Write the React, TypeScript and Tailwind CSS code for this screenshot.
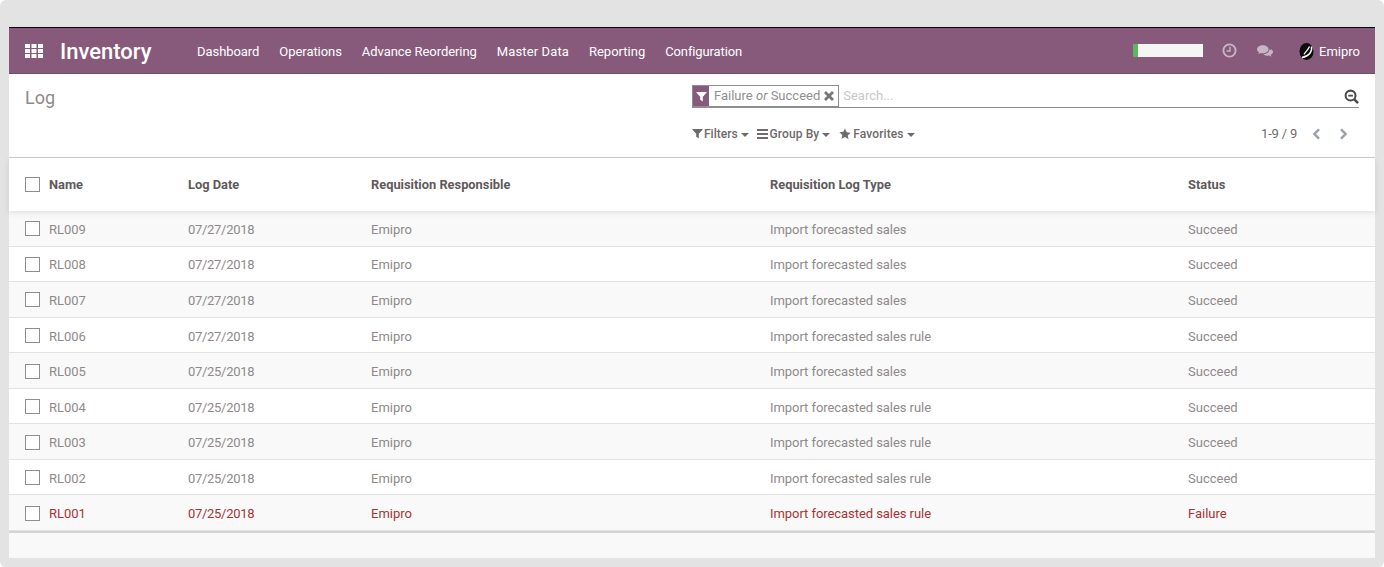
import React from 'react'

const rows = [
  { name: 'RL009', date: '07/27/2018', type: 'Import forecasted sales', status: 'Succeed' },
  { name: 'RL008', date: '07/27/2018', type: 'Import forecasted sales', status: 'Succeed' },
  { name: 'RL007', date: '07/27/2018', type: 'Import forecasted sales', status: 'Succeed' },
  { name: 'RL006', date: '07/27/2018', type: 'Import forecasted sales rule', status: 'Succeed' },
  { name: 'RL005', date: '07/25/2018', type: 'Import forecasted sales', status: 'Succeed' },
  { name: 'RL004', date: '07/25/2018', type: 'Import forecasted sales rule', status: 'Succeed' },
  { name: 'RL003', date: '07/25/2018', type: 'Import forecasted sales rule', status: 'Succeed' },
  { name: 'RL002', date: '07/25/2018', type: 'Import forecasted sales rule', status: 'Succeed' },
  { name: 'RL001', date: '07/25/2018', type: 'Import forecasted sales rule', status: 'Failure' },
]

const menu = [
  { label: 'Dashboard', className: 'tracking-[-0.06px]' },
  { label: 'Operations', className: 'tracking-[-0.06px]' },
  { label: 'Advance Reordering', className: 'tracking-[-0.06px]' },
  { label: 'Master Data', className: 'tracking-[0.12px]' },
  { label: 'Reporting', className: '' },
  { label: 'Configuration', className: 'tracking-[-0.12px]' },
]

const FunnelIcon = ({ className }: { className: string }) => (
  <svg viewBox="0 0 12 12" className={className} fill="currentColor">
    <path d="M0.5 1h11v1L7.4 6.4V11.5L4.6 9.6V6.4L0.5 2z" />
  </svg>
)

const Caret = () => (
  <span className="ml-[3px] mt-[2px] inline-block border-x-[4px] border-t-[4px] border-x-transparent border-t-[#6f6a6c]" />
)

const Checkbox = () => <span className="block size-[15px] border border-[#8e8e8e] bg-white" />

const App: React.FC = () => {
  return (
    <div className="h-[567px] w-[1384px] overflow-hidden rounded-[6px] bg-[#e3e3e3] pl-[9px] pr-[9px] pt-[27px] font-['Roboto',sans-serif] text-[13px]">
      <div className="flex h-[531px] flex-col border-t border-black bg-[#f9f9f9]">
        {/* Navbar */}
        <nav className="flex h-[46px] shrink-0 items-center border-b border-[#6f4f68] bg-[#875a7b] text-white">
          <svg viewBox="0 0 18 14" className="ml-[16px] h-[14px] w-[18px]" fill="currentColor">
            <path d="M0 0h5v4H0zM6.500 0h5v4h-5zM13 0h5v4h-5zM0 5h5v4H0zM6.500 5h5v4h-5zM13 5h5v4h-5zM0 10h5v4H0zM6.500 10h5v4h-5zM13 10h5v4h-5z" />
          </svg>
          <span className="ml-[17px] mt-[2px] w-[137px] text-[22px] font-medium leading-none">Inventory</span>
          <div className="mt-[2px] flex gap-[20px]">
            {menu.map((item) => (
              <span key={item.label} className={item.className}>
                {item.label}
              </span>
            ))}
          </div>
          <div className="ml-auto flex items-center">
            <div className="h-[13px] w-[70px] border-l-[5px] border-[#5cb85c] bg-[#f5f5f5]" />
            <svg viewBox="0 0 16 16" className="ml-[19px] size-[15px] text-[#c8b5c4]" fill="none" stroke="currentColor">
              <circle cx="8" cy="8" r="6.500" strokeWidth="2" />
              <path d="M8.500 4v4.500H5" strokeWidth="1.500" />
            </svg>
            <svg viewBox="0 0 18 14" className="ml-[20px] mt-[1px] h-[13px] w-[16px] text-[#c8b5c4]" fill="currentColor">
              <path d="M6.500 0C2.900 0 0 2 0 4.500c0 1.400.9 2.700 2.300 3.500L1.500 10l2.700-1.300c.7.200 1.500.3 2.300.3 3.600 0 6.500-2 6.500-4.500S10.100 0 6.500 0z" />
              <path d="M14 4.500c0 3-3 5.300-6.800 5.500 1 1 2.700 1.700 4.500 1.700.6 0 1.200-.1 1.800-.2l2.700 1.500-.8-2.300c1.600-.8 2.600-2 2.600-3.400 0-1.300-1.100-2.500-2.600-3.200.4.400.6.900.6 1.400z" />
            </svg>
            <svg viewBox="0 0 15 17" className="ml-[26px] mt-[1px] h-[17px] w-[15px]" fill="none">
              <ellipse cx="7.500" cy="8.500" rx="7" ry="8.500" fill="#0c0c0c" />
              <path d="M12.500 3.500C13.500 8.500 10 13.500 3 14.500" stroke="#fff" strokeWidth="1.500" />
              <path d="M10.500 3.500C9.500 6.500 6.500 8.500 5 11.500" stroke="#fff" strokeWidth="1.200" />
            </svg>
            <span className="ml-[5px] mr-[16px] mt-[2px] w-[40px]">Emipro</span>
          </div>
        </nav>

        {/* Control panel */}
        <div className="flex h-[84px] shrink-0 border-b border-[#cccccc] bg-white pl-[16px] pr-[16px]">
          <div className="w-[667px] pt-[12px] text-[18px] leading-[24px] text-[#8f8a8a]">Log</div>
          <div className="flex-1 pt-[11px]">
            <div className="flex h-[23px] items-center border-b border-[#8e8e8e]">
              <div className="flex h-[22px] items-center border border-[#8e8e8e] bg-white">
                <span className="flex h-full w-[16px] items-center justify-center bg-[#875a7b] text-white">
                  <FunnelIcon className="size-[11px]" />
                </span>
                <span className="ml-[5px] text-[#8f8f8f]">
                  Failure <em className="italic">or</em> Succeed
                </span>
                <svg viewBox="0 0 10 10" className="ml-[4px] mr-[4px] size-[10px] text-[#777777]" stroke="currentColor" strokeWidth="2.800">
                  <path d="M1 1l8 8M9 1l-8 8" />
                </svg>
              </div>
              <span className="ml-[4px] text-[#c9c9c9]">Search...</span>
              <svg viewBox="0 0 16 16" className="ml-auto size-[15px] text-[#4c4c4c]" fill="none" stroke="currentColor">
                <circle cx="7" cy="7" r="5.300" strokeWidth="2.200" />
                <path d="M11 11l4 4" strokeWidth="2.800" />
                <path d="M4.500 7h5" strokeWidth="1.800" />
              </svg>
            </div>
            <div className="mt-[16px] flex items-center text-[12px] font-medium text-[#6f6a6c]">
              <FunnelIcon className="mr-[1px] size-[11px]" />
              <span>Filters</span>
              <Caret />
              <svg viewBox="0 0 11 10" className="ml-[8px] mr-[2px] h-[10px] w-[11px]" fill="currentColor">
                <path d="M0 0h11v2H0zM0 4h11v2H0zM0 8h11v2H0z" />
              </svg>
              <span className="tracking-[0.1px]">Group By</span>
              <Caret />
              <svg viewBox="0 0 24 24" className="ml-[9px] mr-[2px] size-[12px]" fill="currentColor">
                <path d="M12 1l3.400 7.300 7.900 1-5.800 5.500 1.500 7.900L12 18l-7 3.700 1.500-7.900L.7 8.300l7.900-1z" />
              </svg>
              <span className="tracking-[0.1px]">Favorites</span>
              <Caret />
              <div className="ml-auto flex items-center pr-[11px] font-normal text-[#6f6a6c]">
                <span className="mr-[15px] text-[13px] tracking-[-0.2px]">1-9 / 9</span>
                <svg viewBox="0 0 10 14" className="mr-[18px] h-[12px] w-[9px] text-[#9aa0a6]" fill="none" stroke="currentColor" strokeWidth="2.800">
                  <path d="M8 1.500L2.500 7 8 12.500" />
                </svg>
                <svg viewBox="0 0 10 14" className="h-[12px] w-[9px] text-[#9aa0a6]" fill="none" stroke="currentColor" strokeWidth="2.800">
                  <path d="M2 1.500L7.500 7 2 12.500" />
                </svg>
              </div>
            </div>
          </div>
        </div>

        {/* Log list */}
        <div className="relative z-10 flex h-[53px] shrink-0 items-center bg-white text-[12.850px] font-bold text-[#5f5a5c] shadow-[0_2px_6px_rgba(0,0,0,0.1)]">
          <div className="flex w-[179px] items-center pl-[16px]">
            <Checkbox />
            <span className="ml-[9px] mt-[1px]">Name</span>
          </div>
          <div className="mt-[1px] w-[183px]">Log Date</div>
          <div className="mt-[1px] w-[399px]">Requisition Responsible</div>
          <div className="mt-[1px] w-[418px]">Requisition Log Type</div>
          <div className="mt-[1px]">Status</div>
        </div>
        {rows.map((row, i) => (
          <div
            key={row.name}
            className={`flex h-[35.550px] shrink-0 items-center border-b border-[#e2e2e2] pt-[2.800px] ${i % 2 === 0 ? 'bg-[#f9f9f9]' : 'bg-white'} ${
              row.status === 'Failure' ? 'text-[#a83333]' : 'text-[#8f8a8a]'
            }`}
          >
            <div className="flex w-[179px] items-center pl-[16px]">
              <div className="-mt-[1.700px]">
                <Checkbox />
              </div>
              <span className="ml-[9px]">{row.name}</span>
            </div>
            <div className="w-[183px] tracking-[-0.3px]">{row.date}</div>
            <div className="w-[399px]">Emipro</div>
            <div className="w-[418px] tracking-[-0.06px]">{row.type}</div>
            <div>{row.status}</div>
          </div>
        ))}
        <div className="h-[2px] shrink-0 bg-[#d4d4d4]" />
      </div>
    </div>
  )
}

export default App
